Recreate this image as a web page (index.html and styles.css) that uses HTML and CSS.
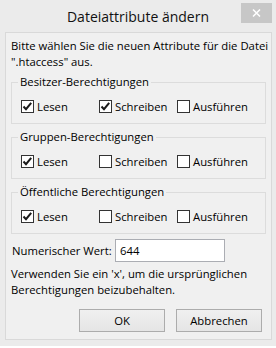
FILE: index.html
```html
<!DOCTYPE html>
<html lang="de">
<head>
    <meta charset="UTF-8">
    <title>Dateiattribute ändern</title>
    <link rel="stylesheet" href="styles.css">
</head>
<body>

<!-- Dialogfenster -->
<div class="window">
    <div class="titlebar">
        <span class="title">Dateiattribute ändern</span>
        <span class="close">
            <svg width="9" height="8" viewBox="0 0 9 8"><path d="M1 0.5 L8 7.5 M8 0.5 L1 7.5" stroke="#fff" stroke-width="1.5" fill="none"/></svg>
        </span>
    </div>

    <div class="content">
        <p class="intro">Bitte wählen Sie die neuen Attribute für die Datei<br>".htaccess" aus.</p>

        <fieldset class="group">
            <legend>Besitzer-Berechtigungen</legend>
            <div class="perms">
                <label class="perm"><span class="box checked"><svg width="11" height="11" viewBox="0 0 11 11"><path d="M1.5 5.5 L4 8.2 L9.2 1.8" stroke="#1a1a1a" stroke-width="2" fill="none"/></svg></span>Lesen</label>
                <label class="perm"><span class="box checked"><svg width="11" height="11" viewBox="0 0 11 11"><path d="M1.5 5.5 L4 8.2 L9.2 1.8" stroke="#1a1a1a" stroke-width="2" fill="none"/></svg></span>Schreiben</label>
                <label class="perm"><span class="box"></span>Ausführen</label>
            </div>
        </fieldset>

        <fieldset class="group">
            <legend>Gruppen-Berechtigungen</legend>
            <div class="perms">
                <label class="perm"><span class="box checked"><svg width="11" height="11" viewBox="0 0 11 11"><path d="M1.5 5.5 L4 8.2 L9.2 1.8" stroke="#1a1a1a" stroke-width="2" fill="none"/></svg></span>Lesen</label>
                <label class="perm"><span class="box"></span>Schreiben</label>
                <label class="perm"><span class="box"></span>Ausführen</label>
            </div>
        </fieldset>

        <fieldset class="group">
            <legend>Öffentliche Berechtigungen</legend>
            <div class="perms">
                <label class="perm"><span class="box checked"><svg width="11" height="11" viewBox="0 0 11 11"><path d="M1.5 5.5 L4 8.2 L9.2 1.8" stroke="#1a1a1a" stroke-width="2" fill="none"/></svg></span>Lesen</label>
                <label class="perm"><span class="box"></span>Schreiben</label>
                <label class="perm"><span class="box"></span>Ausführen</label>
            </div>
        </fieldset>

        <div class="numeric">
            <span class="numeric-label">Numerischer Wert:</span>
            <span class="field">644</span>
        </div>

        <p class="hint">Verwenden Sie ein 'x', um die ursprünglichen<br>Berechtigungen beizubehalten.</p>

        <div class="buttons">
            <button>OK</button>
            <button>Abbrechen</button>
        </div>
    </div>
</div>

</body>
</html>
```

FILE: styles.css
```css
body {
    margin: 0;
    background: #fff;
    font-family: "Open Sans", "Noto Sans", sans-serif;
    font-size: 11.3px;
    color: #000;
}
.window {
    width: 276px;
    height: 346px;
    background: #ebebeb;
}
.titlebar {
    position: relative;
    height: 32px;
    box-sizing: border-box;
    padding-top: 7px;
    text-align: center;
    font-size: 14px;
    line-height: 20px;
    color: #111;
}
.close {
    position: absolute;
    left: 241px;
    top: 3px;
    width: 31px;
    height: 20px;
    background: #c7c7c7;
    display: flex;
    align-items: center;
    justify-content: center;
}
.content {
    margin-left: 5px;
    width: 267px;
    height: 308px;
    box-sizing: border-box;
    border: 1px solid #d9d9d9;
    background: #f0f0f0;
    padding: 5px 5px 0 5px;
}
.intro, .hint {
    margin: 0;
    line-height: 16px;
    white-space: nowrap;
}
.group {
    margin: 4px 0 0;
    padding: 8px 6px 8px 6px;
    border: 1px solid #dcdcdc;
    min-width: 0;
}
.group + .group {
    margin-top: 5px;
}
.group legend {
    padding: 0 2px;
    line-height: 16px;
}
.perms {
    display: grid;
    grid-template-columns: 78px 78px auto;
    margin-left: 3px;
    height: 17px;
}
.perm {
    display: flex;
    align-items: center;
    gap: 3px;
}
.box {
    width: 13px;
    height: 13px;
    box-sizing: border-box;
    border: 1px solid #333;
    background: #fff;
    display: flex;
}
.numeric {
    display: flex;
    align-items: center;
    margin-top: 5px;
}
.numeric-label {
    width: 104px;
    padding-left: 1px;
    box-sizing: border-box;
}
.field {
    width: 110px;
    height: 23px;
    box-sizing: border-box;
    border: 1px solid #abadb3;
    background: #fff;
    padding-left: 4px;
    line-height: 21px;
}
.hint {
    margin-top: 4px;
}
.buttons {
    display: flex;
    justify-content: flex-end;
    gap: 11px;
    margin-top: 11px;
    padding-right: 4px;
}
.buttons button {
    width: 86px;
    height: 23px;
    padding: 0;
    border: 1px solid #acacac;
    background: linear-gradient(#f0f0f0, #e5e5e5);
    font-family: inherit;
    font-size: 11.3px;
    color: #000;
}
```
